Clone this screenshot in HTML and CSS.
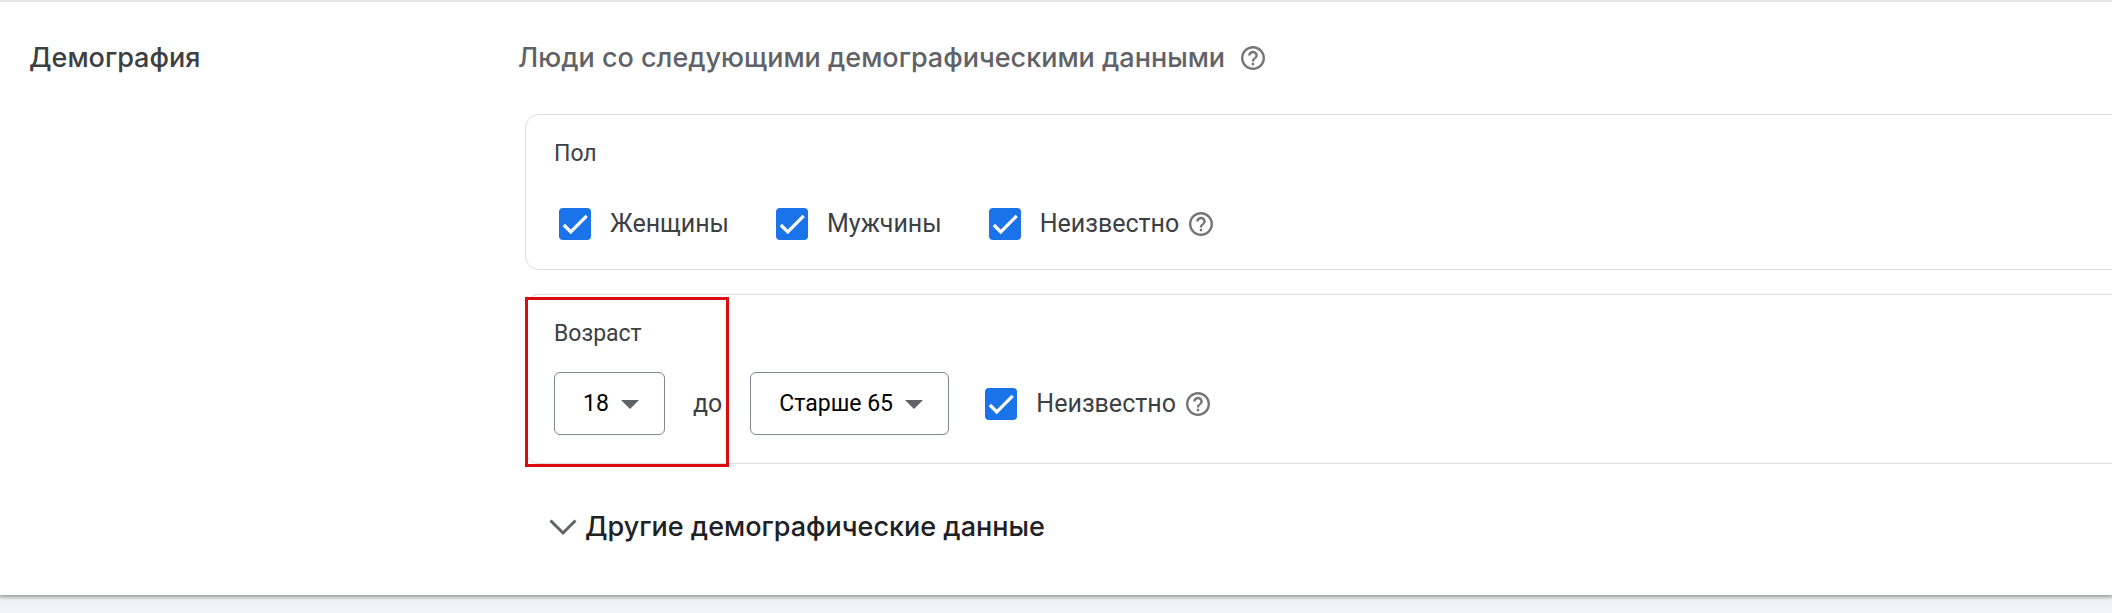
FILE: index.html
```html
<!DOCTYPE html>
<html lang="ru">
<head>
  <meta charset="UTF-8">
  <title>Демография</title>
  <link rel="stylesheet" href="styles.css">
</head>
<body>
  <svg class="sprite" aria-hidden="true">
    <symbol id="help" viewBox="2 2 20 20">
      <path d="M11 18h2v-2h-2v2zm1-16C6.48 2 2 6.48 2 12s4.48 10 10 10 10-4.48 10-10S17.52 2 12 2zm0 18c-4.41 0-8-3.59-8-8s3.59-8 8-8 8 3.59 8 8-3.59 8-8 8zm0-14c-2.21 0-4 1.79-4 4h2c0-1.1.9-2 2-2s2 .9 2 2c0 2-3 1.75-3 5h2c0-2.25 3-2.5 3-5 0-2.21-1.79-4-4-4z"/>
    </symbol>
    <symbol id="tick" viewBox="0 0 24 24">
      <path d="M1.73 12.91 8.1 19.28 22.79 4.59" fill="none" stroke="currentColor" stroke-width="3"/>
    </symbol>
  </svg>

  <section class="panel">
    <h2 class="panel-title">Демография</h2>
    <div class="content">
      <div class="subtitle">
        <h3>Люди со следующими демографическими данными</h3>
        <svg class="help"><use href="#help"/></svg>
      </div>

      <fieldset class="card">
        <div class="card-title">Пол</div>
        <div class="row gender">
          <label class="check"><span class="box"><input type="checkbox" checked><svg><use href="#tick"/></svg></span>Женщины</label>
          <label class="check"><span class="box"><input type="checkbox" checked><svg><use href="#tick"/></svg></span>Мужчины</label>
          <div class="with-help">
            <label class="check"><span class="box"><input type="checkbox" checked><svg><use href="#tick"/></svg></span>Неизвестно</label>
            <svg class="help"><use href="#help"/></svg>
          </div>
        </div>
      </fieldset>

      <fieldset class="card">
        <div class="card-title">Возраст</div>
        <div class="row age">
          <div class="dropdown">
            <select aria-label="Возраст от"><option>18</option></select>
          </div>
          <span class="to">до</span>
          <div class="dropdown">
            <select aria-label="Возраст до"><option>Старше 65</option></select>
          </div>
          <div class="with-help">
            <label class="check"><span class="box"><input type="checkbox" checked><svg><use href="#tick"/></svg></span>Неизвестно</label>
            <svg class="help"><use href="#help"/></svg>
          </div>
        </div>
        <div class="highlight"></div>
      </fieldset>

      <button class="more" type="button">
        <svg class="chevron" viewBox="0 0 28 18"><path d="M1.5 2.500 14 15 26.500 2.500"/></svg>
        Другие демографические данные
      </button>
    </div>
  </section>
</body>
</html>
```

FILE: styles.css
```css
* {
  box-sizing: border-box;
}
body {
  min-height: 100vh;
  margin: 0;
  background: #f1f3f4;
  color: #3c4043;
  font-family: Roboto, sans-serif;
  font-size: 25px;
  line-height: 32px;
}
.sprite {
  display: none;
}
.panel {
  display: flex;
  padding: 40px 0 52px 29px;
  border-top: 2px solid #e2e7e6;
  background: #fff;
  box-shadow: 0 1px 4px 1px #8f9696;
}
h2, h3 {
  margin: 0;
  font-family: Inter, sans-serif;
  font-size: 27px;
  font-weight: 500;
  line-height: 32px;
}
.panel-title {
  flex: 0 0 489px;
}
.content {
  flex: 1;
  min-width: 0;
  overflow: hidden;
}
.subtitle {
  display: flex;
  align-items: center;
  gap: 16px;
  margin-bottom: 40px;
  color: #5f6368;
}
.help {
  width: 24px;
  height: 24px;
  fill: #757575;
}
.card {
  position: relative;
  min-width: 0;
  margin: 0 -16px 24px 7px;
  padding: 23px 28px 28px;
  border: 1px solid #dadce0;
  border-radius: 14px;
}
.card-title {
  font-size: 23px;
}
.row {
  display: flex;
  align-items: center;
}
.gender {
  gap: 47px;
  margin: 38px 0 1px;
  padding-left: 5px;
}
.age {
  gap: 28px;
  margin-top: 22px;
}
.check {
  display: flex;
  align-items: center;
  gap: 19px;
}
.with-help {
  display: flex;
  align-items: center;
  gap: 10px;
}
.age .with-help {
  margin-left: 8px;
}
.box {
  display: grid;
  width: 32px;
  height: 32px;
}
.box input {
  grid-area: 1 / 1;
  appearance: none;
  width: 32px;
  height: 32px;
  margin: 0;
  border: 3px solid #5f6368;
  border-radius: 4px;
}
.box input:checked {
  border-color: #1a73e8;
  background: #1a73e8;
}
.box svg {
  grid-area: 1 / 1;
  place-self: center;
  width: 26px;
  height: 26px;
  color: #fff;
  pointer-events: none;
}
.dropdown {
  position: relative;
}
.dropdown select {
  display: block;
  appearance: none;
  height: 63px;
  padding: 0 55px 0 28px;
  border: 1px solid #80868b;
  border-radius: 6px;
  background: #fff;
  color: #000;
  font: 23px Roboto, sans-serif;
}
.dropdown::after {
  content: "";
  position: absolute;
  top: 28px;
  right: 26px;
  border: 9px solid transparent;
  border-top-color: #5f6368;
  border-bottom: 0;
  pointer-events: none;
}
.highlight {
  position: absolute;
  top: 2px;
  left: -1px;
  width: 204px;
  height: 170px;
  border: 3px solid #dc0b0f;
  pointer-events: none;
}
.more {
  display: flex;
  align-items: center;
  gap: 8px;
  margin: 47px 0 0 25px;
  padding: 0 0 0 6px;
  border: 0;
  background: none;
  color: #202124;
  font: 500 27px/32px Inter, sans-serif;
}
.chevron {
  width: 28px;
  height: 18px;
  fill: none;
  stroke: #5f6368;
  stroke-width: 3;
}
```
